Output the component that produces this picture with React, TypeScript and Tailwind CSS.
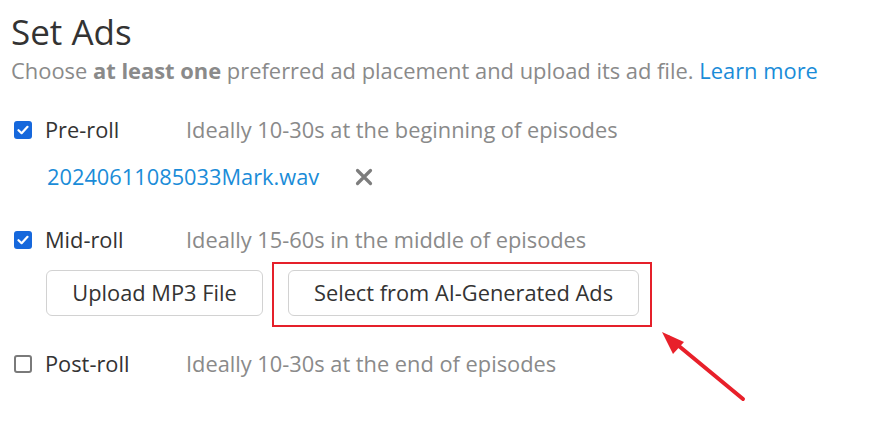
import React from "react";

function Check({ checked }: { checked: boolean }) {
  if (checked) {
    return (
      <span className="flex h-[18px] w-[18px] items-center justify-center rounded-[3px] bg-[#1668dc]">
        <svg width="12" height="10" viewBox="0 0 12 10">
          <path d="M1.5 5.2 L4.6 8.2 L10.5 1.8" fill="none" stroke="white" strokeWidth="2.2" strokeLinecap="round" strokeLinejoin="round" />
        </svg>
      </span>
    );
  }
  return <span className="block h-[18px] w-[18px] rounded-[3px] border-2 border-[#7a7a7a] bg-white" />;
}

function Row({ checked, label, desc }: { checked: boolean; label: string; desc: string }) {
  return (
    <div className="flex h-[28px] items-center">
      <div className="ml-[14px] w-[31px]">
        <Check checked={checked} />
      </div>
      <span className="w-[141px] text-[#333333]">{label}</span>
      <span className="text-[#8a8a8a]">{desc}</span>
    </div>
  );
}

export default function App() {
  return (
    <div
      className="relative h-[443px] w-[873px] overflow-hidden bg-white text-[21.8px] leading-[28px]"
      style={{ fontFamily: '"Open Sans", sans-serif' }}
    >
      <div className="pl-[11px] pt-3">
        <h1 className="text-[35px] font-medium leading-[40px] text-[#333333]">Set Ads</h1>
        <p className="mt-[5px] text-[21.9px] text-[#8a8a8a]">
          Choose <span className="font-bold">at least one</span> preferred ad placement and upload its ad file.{" "}
          <span className="text-[#1a8cd8]">Learn more</span>
        </p>
      </div>

      <div className="mt-[31px]">
        <Row checked={true} label="Pre-roll" desc="Ideally 10-30s at the beginning of episodes" />
        <div className="mt-[19px] flex h-[28px] items-center pl-[47px]">
          <span className="w-[308px] text-[#1a8cd8]">20240611085033Mark.wav</span>
          <svg width="18" height="18" viewBox="0 0 18 18">
            <path d="M2.5 2.5 L15.5 15.5 M15.5 2.5 L2.5 15.5" stroke="#7d7d7d" strokeWidth="3.2" strokeLinecap="round" />
          </svg>
        </div>

        <div className="mt-[35px]">
          <Row checked={true} label="Mid-roll" desc="Ideally 15-60s in the middle of episodes" />
        </div>
        <div className="mt-[16px] flex items-center gap-[25px] pl-[46px]">
          <button className="h-[46px] w-[217px] rounded-[6px] border border-[#d2d2d2] bg-white text-[#333333]">
            Upload MP3 File
          </button>
          <div className="relative">
            <button className="h-[46px] w-[351px] rounded-[6px] border border-[#d2d2d2] bg-white text-[#333333]">
              Select from AI-Generated Ads
            </button>
            <div className="pointer-events-none absolute left-[-16px] top-[-8px] h-[65px] w-[380px] border-2 border-[#e5202a]" />
          </div>
        </div>

        <div className="mt-[34px]">
          <Row checked={false} label="Post-roll" desc="Ideally 10-30s at the end of episodes" />
        </div>
      </div>

      <svg className="absolute left-0 top-0" width="873" height="443" viewBox="0 0 873 443">
        <path d="M743 399 L668 337" stroke="#e8202a" strokeWidth="4" strokeLinecap="round" />
        <path d="M662 332 L684 342 L673 354 Z" fill="#e8202a" />
      </svg>
    </div>
  );
}
